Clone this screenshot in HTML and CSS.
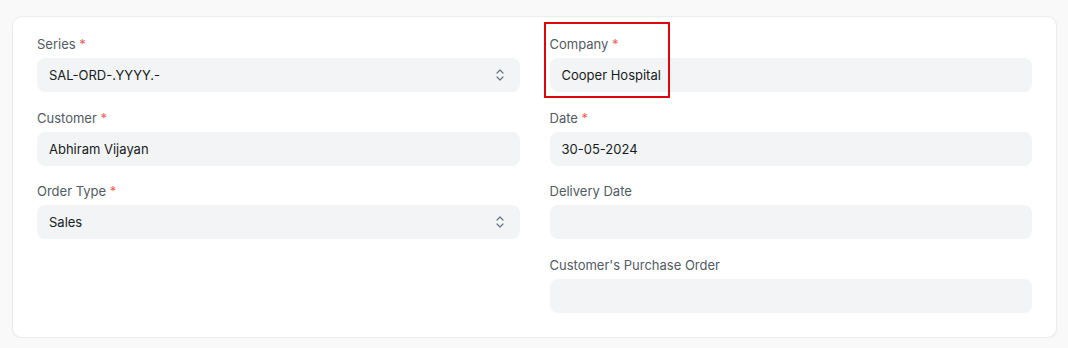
FILE: index.html
```html
<!DOCTYPE html>
<html lang="en">

<head>
  <meta charset="UTF-8">
  <meta name="viewport" content="width=device-width, initial-scale=1.0">
  <title>Sales Order</title>
  <link rel="stylesheet" href="styles.css">
</head>

<body>

  <div class="form-card">
    <div class="form-column">
      <div class="field">
        <label class="field-label">Series <span class="reqd">*</span></label>
        <div class="field-control select">
          <span>SAL-ORD-.YYYY.-</span>
          <svg class="select-icon" width="8" height="12" viewBox="0 0 8 12">
            <path d="M1 4 L4 1 L7 4 M1 8 L4 11 L7 8" fill="none" stroke="#6b7280" stroke-width="1.2" stroke-linecap="round" stroke-linejoin="round"/>
          </svg>
        </div>
      </div>

      <div class="field">
        <label class="field-label">Customer <span class="reqd">*</span></label>
        <div class="field-control">Abhiram Vijayan</div>
      </div>

      <div class="field">
        <label class="field-label">Order Type <span class="reqd">*</span></label>
        <div class="field-control select">
          <span>Sales</span>
          <svg class="select-icon" width="8" height="12" viewBox="0 0 8 12">
            <path d="M1 4 L4 1 L7 4 M1 8 L4 11 L7 8" fill="none" stroke="#6b7280" stroke-width="1.2" stroke-linecap="round" stroke-linejoin="round"/>
          </svg>
        </div>
      </div>
    </div>

    <div class="form-column">
      <div class="field highlighted">
        <label class="field-label">Company <span class="reqd">*</span></label>
        <div class="field-control">Cooper Hospital</div>
        <div class="highlight-box"></div>
      </div>

      <div class="field">
        <label class="field-label">Date <span class="reqd">*</span></label>
        <div class="field-control">30-05-2024</div>
      </div>

      <div class="field">
        <label class="field-label">Delivery Date</label>
        <div class="field-control"></div>
      </div>

      <div class="field">
        <label class="field-label">Customer's Purchase Order</label>
        <div class="field-control"></div>
      </div>
    </div>
  </div>

</body>

</html>
```

FILE: styles.css
```css
body {
  font-family: 'Inter', 'Liberation Sans', sans-serif;
  background-color: #f8f9f8;
  margin: 0;
  padding: 16px 11px 0 12px;
}

.form-card {
  background-color: #fff;
  border: 1px solid #eceded;
  border-radius: 10px;
  box-shadow: 0 1px 2px rgba(0, 0, 0, 0.05);
  padding: 19px 24px 25px 24px;
  display: grid;
  grid-template-columns: 1fr 1fr;
  column-gap: 30px;
  align-items: start;
  height: 322px;
  box-sizing: border-box;
}

.form-column {
  display: flex;
  flex-direction: column;
  gap: 17.5px;
}

.field {
  position: relative;
}

.field-label {
  display: block;
  font-size: 13px;
  line-height: 16px;
  color: #525a63;
  margin-bottom: 6px;
}

.reqd {
  color: #f0615a;
}

.field-control {
  height: 34px;
  box-sizing: border-box;
  background-color: #f3f4f6;
  border-radius: 8px;
  padding: 0 12px;
  display: flex;
  align-items: center;
  font-size: 13px;
  color: #171c21;
}

.select {
  justify-content: space-between;
  padding-right: 16px;
}

.select-icon {
  display: block;
}

.highlight-box {
  position: absolute;
  left: -6px;
  top: -14px;
  width: 122px;
  height: 72px;
  border: 2px solid #e0070c;
}
```
